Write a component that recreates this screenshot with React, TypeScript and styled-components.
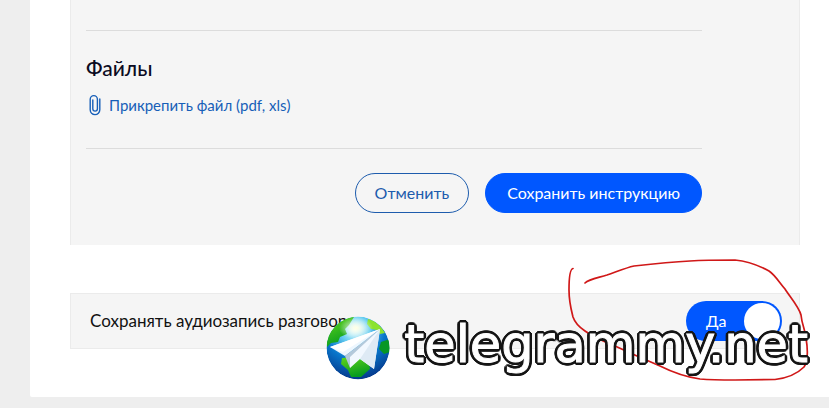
import React, { useState } from "react";
import styled, { createGlobalStyle } from "styled-components";

const GlobalStyle = createGlobalStyle`
  * { box-sizing: border-box; }
  body {
    margin: 0;
    background: #eeeeee;
    color: #111;
    font-family: Lato, "Noto Sans", sans-serif;
    font-size: 17px;
    line-height: 24px;
  }
  button { font: inherit; cursor: pointer; }
`;

const Page = styled.main`
  padding: 0 0 11px 30px;
`;

const Card = styled.div`
  display: flex;
  flex-direction: column;
  gap: 48px;
  padding: 0 29px 48px 40px;
  background: #fff;
  border-bottom-left-radius: 2px;
`;

const Panel = styled.section`
  padding: 30px 97px 32px 15px;
  background: #f5f5f5;
  border-left: 1px solid #ebebeb;
  border-right: 1px solid #ebebeb;
`;

const FilesBlock = styled.div`
  display: flex;
  flex-direction: column;
  align-items: flex-start;
  gap: 11px;
  padding: 23px 0 31px;
  border-top: 1px solid #dcdcdc;
  border-bottom: 1px solid #dcdcdc;
`;

const Heading = styled.h2`
  margin: 0;
  color: #0b0b22;
  font-size: 21px;
  font-weight: 500;
  line-height: 28px;
`;

const AttachLink = styled.a`
  display: inline-flex;
  align-items: center;
  gap: 5px;
  margin-left: 1px;
  color: #175fb8;
  font-size: 15px;
  text-decoration: none;
`;

const Actions = styled.div`
  display: flex;
  justify-content: flex-end;
  gap: 16px;
  padding-top: 24px;
`;

const PillButton = styled.button<{ $primary?: boolean }>`
  && { font-size: 16px; }
  height: 40px;
  padding: 0 ${(p) => (p.$primary ? 21 : 19)}px;
  border: 1px solid ${(p) => (p.$primary ? "#0057ff" : "#1d5cad")};
  border-radius: 20px;
  background: ${(p) => (p.$primary ? "#0057ff" : "transparent")};
  color: ${(p) => (p.$primary ? "#fff" : "#1d5cad")};
`;

const SettingRow = styled.section`
  position: relative;
  display: flex;
  align-items: center;
  justify-content: space-between;
  height: 56px;
  padding: 0 17px 0 19px;
  border: 1px solid #ebebeb;
  background: #f5f5f5;
`;

const Toggle = styled.label`
  position: relative;
  display: flex;
  align-items: center;
  width: 96px;
  height: 40px;
  padding-left: 20px;
  border-radius: 20px;
  background: #0057ff;
  color: #fff;
  font-size: 16px;
  cursor: pointer;
`;

const ToggleInput = styled.input`
  position: absolute;
  inset: 0;
  margin: 0;
  opacity: 0;
`;

const Knob = styled.span`
  width: 36px;
  height: 36px;
  margin: 0 2px 0 auto;
  border-radius: 50%;
  background: #fff;
`;

const Marker = styled.svg`
  position: absolute;
  right: -11px;
  top: -44px;
  pointer-events: none;
`;

const Watermark = styled.div`
  position: absolute;
  right: -9px;
  top: 22px;
  display: flex;
  align-items: center;
  gap: 14px;
  pointer-events: none;
`;

const WatermarkText = styled.span`
  color: #fff;
  font-family: "DejaVu Sans", sans-serif;
  font-size: 51px;
  line-height: 58px;
  margin-bottom: 6px;
  -webkit-text-stroke: 1px #fff;
  text-shadow:
    3px 0 #151515, -3px 0 #151515, 0 3px #151515, 0 -3px #151515,
    3px 1px #151515, -3px 1px #151515, 3px -1px #151515, -3px -1px #151515,
    1px 3px #151515, -1px 3px #151515, 1px -3px #151515, -1px -3px #151515,
    2px 2px #151515, -2px 2px #151515, 2px -2px #151515, -2px -2px #151515;
`;

function ClipIcon() {
  return (
    <svg width="17" height="22" viewBox="0 0 17 22" fill="none" stroke="currentColor" strokeWidth="1.4" strokeLinecap="round" aria-hidden="true">
      <path d="M12.8 5v10.8a4.8 4.8 0 0 1-9.6 0V5.2a3.6 3.6 0 0 1 7.2 0v9.6a2.3 2.3 0 0 1-4.6 0V6" />
    </svg>
  );
}

function GlobeLogo() {
  return (
    <svg width="64" height="64" viewBox="0 0 64 64" aria-hidden="true">
      <defs>
        <radialGradient id="sea" cx="45%" cy="20%" r="80%">
          <stop offset="0" stopColor="#e9ffff" />
          <stop offset=".28" stopColor="#66cdf0" />
          <stop offset=".6" stopColor="#0876cb" />
          <stop offset="1" stopColor="#05398c" />
        </radialGradient>
        <linearGradient id="land" x1="0" y1="0" x2=".4" y2="1">
          <stop offset="0" stopColor="#62d51b" />
          <stop offset="1" stopColor="#079c20" />
        </linearGradient>
        <radialGradient id="shine">
          <stop offset="0" stopColor="#ffffe5" />
          <stop offset="1" stopColor="#fff" stopOpacity="0" />
        </radialGradient>
        <clipPath id="globe"><circle cx="32" cy="32" r="31.5" /></clipPath>
      </defs>
      <g clipPath="url(#globe)">
        <circle cx="32" cy="32" r="31.5" fill="url(#sea)" />
        <path d="M6 14C12 5 19 2 28 1l-5 8-4 4 2 5-7 3-2 5-7 1-4 4C0 24 2 19 6 14Z" fill="url(#land)" />
        <path d="M42 3c8 2 13 7 17 14l-5 1-3-4-6-1-4-5Z" fill="#8be32f" />
        <path d="m55 26 9-3v13l-6 2-5-5Z" fill="#079725" />
        <path d="m16 42 13-1 14 6 1 6-9 8H25l-3-7-7-6Z" fill="url(#land)" />
        <ellipse cx="30" cy="12" rx="17" ry="11" fill="url(#shine)" />
      </g>
      <path d="M4 31 54 13 19 40Z" fill="#edf7ff" />
      <path d="m19 40 35-27-28 28-2 11Z" fill="#b4c9db" />
      <path d="m4 31 50-18-37 23Z" fill="#fff" />
      <path d="M24 41 54 13 48 53 34 43l-10 9Z" fill="#f2f8ff" />
      <path d="M34 43 54 13 48 53Z" fill="#deeaf5" />
    </svg>
  );
}

export default function App() {
  const [saveAudio, setSaveAudio] = useState(true);
  return (
    <>
      <GlobalStyle />
      <Page>
        <Card>
          <Panel>
            <FilesBlock>
              <Heading>Файлы</Heading>
              <AttachLink href="#attach">
                <ClipIcon />
                Прикрепить файл (pdf, xls)
              </AttachLink>
            </FilesBlock>
            <Actions>
              <PillButton type="button">Отменить</PillButton>
              <PillButton type="button" $primary>Сохранить инструкцию</PillButton>
            </Actions>
          </Panel>
          <SettingRow>
            <label htmlFor="save-audio">Сохранять аудиозапись разговора</label>
            <Toggle>
              <ToggleInput
                id="save-audio"
                type="checkbox"
                role="switch"
                checked={saveAudio}
                onChange={(e) => setSaveAudio(e.target.checked)}
              />
              Да
              <Knob />
            </Toggle>
            <Marker width="250" height="140" viewBox="560 250 250 140" fill="none" stroke="#d01818" strokeWidth="1.7" strokeLinecap="round" aria-hidden="true">
              <path d="M573 268.5C570 269 569 276 569 290C569 302 571 309 573 317C575 323 579 327 585 331C593 337 603 341 615 346L637 356L660 366C674 373 686 377 700 379C712 380 723 380 735 380L775 379.500C788 378 798 373 804 367C808 361 808 350 806 338C805 329 802 325 801 315C799 307 790 297 785 289C779 282 775 275 769 271C758 265 746 261 735 260C720 260 705 260 690 261C671 262 652 264 634 266C625 268 616 272 607 275C597 278 589 279 585 283" />
            </Marker>
            <Watermark>
              <GlobeLogo />
              <WatermarkText>telegrammy.net</WatermarkText>
            </Watermark>
          </SettingRow>
        </Card>
      </Page>
    </>
  );
}
